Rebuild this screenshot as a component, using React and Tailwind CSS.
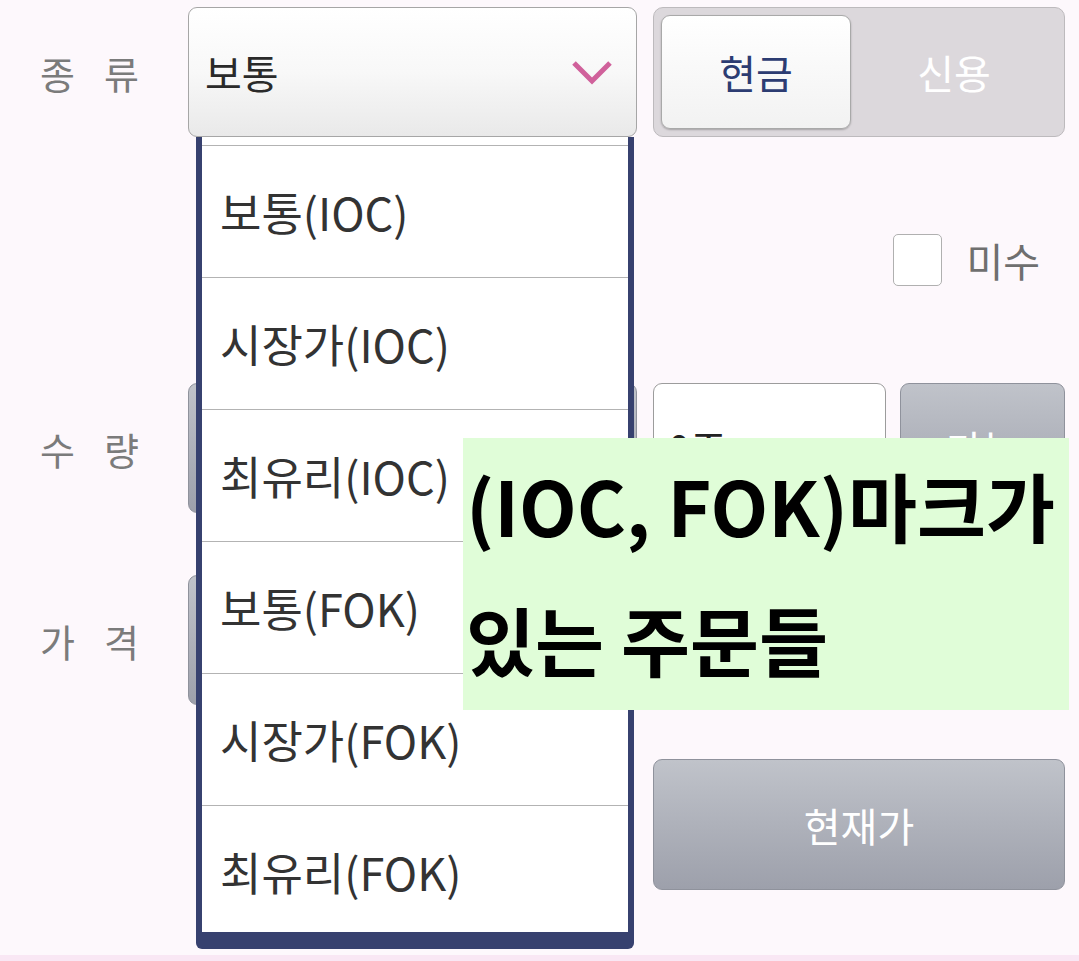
import React from 'react';

const font = { fontFamily: '"Noto Sans CJK KR", "Noto Sans", sans-serif' };

const items = ['보통(IOC)', '시장가(IOC)', '최유리(IOC)', '보통(FOK)', '시장가(FOK)', '최유리(FOK)'];

const Label = ({ a, b }) => (
  <div className="w-[188px] h-full flex items-center pl-[40px] gap-[29px] text-[38px] text-[#7b7b7b]">
    <span>{a}</span>
    <span>{b}</span>
  </div>
);

const GrayBox = ({ className, children }) => (
  <div
    className={`rounded-[9px] border border-[#8f929c] bg-gradient-to-b from-[#c0c3ca] to-[#9da0ab] flex items-center justify-center text-white text-[40px] ${className}`}
  >
    {children}
  </div>
);

export default function App() {
  return (
    <div className="w-[1079px] h-[961px] flex flex-col bg-[#fdf8fc] relative overflow-hidden" style={font}>
      <div className="flex-1 flex flex-col pt-[7px]">
        {/* 종류 */}
        <div className="flex h-[130px]">
          <Label a="종" b="류" />
          <div className="w-[449px] h-full rounded-[9px] border border-[#a6a6a6] bg-gradient-to-b from-[#ffffff] via-[#f8f8f8] to-[#e9e9e9] flex items-center justify-between pl-[16px] pr-[22px]">
            <span className="text-[40px] text-[#2a2a2a]">보통</span>
            <svg width="44" height="30" viewBox="0 0 44 30">
              <polyline points="4,6 22,24 40,6" fill="none" stroke="#d0619b" strokeWidth="5" />
            </svg>
          </div>
          <div className="ml-[16px] w-[412px] h-full rounded-[10px] border border-[#bdbabd] bg-[#dcd8dc] flex p-[7px]">
            <div className="w-[190px] h-full rounded-[9px] border border-[#a9a9a9] bg-gradient-to-b from-[#ffffff] to-[#f2f2f2] shadow-[0_1px_2px_rgba(0,0,0,0.25)] flex items-center justify-center text-[40px] text-[#2c3c72]">
              현금
            </div>
            <div className="flex-1 flex items-center justify-center text-[40px] text-white">신용</div>
          </div>
        </div>

        {/* 미수 */}
        <div className="mt-[97px] h-[52px] flex justify-end items-center pr-[39px]">
          <div className="w-[49px] h-[52px] rounded-[5px] border border-[#b0b0b0] bg-white" />
          <span className="ml-[24px] text-[40px] text-[#6f6f6f]">미수</span>
        </div>

        {/* 수량 */}
        <div className="mt-[97px] flex h-[130px]">
          <Label a="수" b="량" />
          <GrayBox className="w-[449px] h-full" />
          <div className="ml-[16px] w-[233px] h-full rounded-[9px] border border-[#9c9c9c] bg-white flex items-center pl-[14px] text-[40px] text-[#222]">
            0주
          </div>
          <GrayBox className="ml-[14px] w-[165px] h-full">가능</GrayBox>
        </div>

        {/* 가격 */}
        <div className="mt-[62px] flex h-[130px]">
          <Label a="가" b="격" />
          <GrayBox className="w-[449px] h-full" />
          <div className="ml-[16px] w-[412px] h-full rounded-[9px] border border-[#9c9c9c] bg-white" />
        </div>

        {/* 현재가 */}
        <div className="mt-[54px] flex h-[131px]">
          <div className="w-[653px]" />
          <GrayBox className="w-[412px] h-full">현재가</GrayBox>
        </div>
      </div>
      <div className="h-[6px] bg-[#f9e7f4]" />

      {/* dropdown list */}
      <div className="absolute left-[196px] top-[137px] w-[438px] h-[812px] bg-[#37416f] rounded-b-[6px] px-[6px] pb-[17px]">
        <div className="h-full bg-white overflow-hidden pt-[8px]">
          {items.map((it) => (
            <div
              key={it}
              className="h-[132px] border-t border-[#b3b3b3] flex items-center pl-[18px] text-[45px] text-[#333333]"
            >
              {it}
            </div>
          ))}
        </div>
      </div>

      {/* annotation */}
      <div className="absolute left-[463px] top-[438px] w-[606px] h-[272px] bg-[#e0fdd8] pl-[3px] text-[75px] font-bold leading-[134px] text-black">
        <div className="whitespace-nowrap">(IOC, FOK)마크가</div>
        <div className="whitespace-nowrap">있는 주문들</div>
      </div>
    </div>
  );
}
